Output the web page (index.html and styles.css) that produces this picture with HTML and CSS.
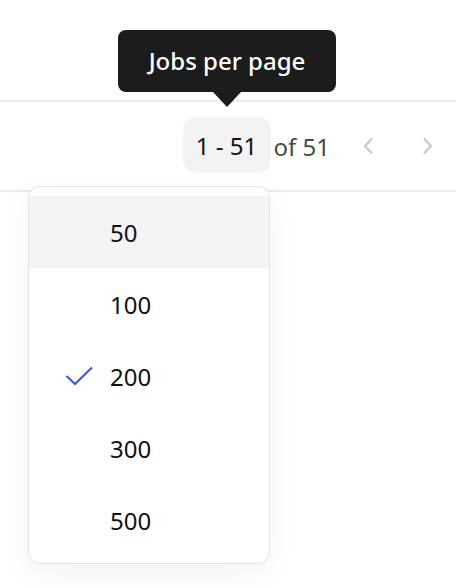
FILE: index.html
```html
<!DOCTYPE html>
<html>
<head>
<meta charset="utf-8">
<link rel="stylesheet" href="styles.css">
</head>
<body>
<div class="page">
  <div class="header"></div>
  <div class="toolbar">
    <button class="range">1 - 51</button>
    <span class="total">of 51</span>
    <button class="nav prev" aria-label="Previous">
      <svg width="12" height="18" viewBox="0 0 12 18"><path d="M10 1.5 L3 9 L10 16.5" fill="none" stroke="#c6c6c6" stroke-width="2"/></svg>
    </button>
    <button class="nav next" aria-label="Next">
      <svg width="12" height="18" viewBox="0 0 12 18"><path d="M2 1.5 L9 9 L2 16.5" fill="none" stroke="#c6c6c6" stroke-width="2"/></svg>
    </button>
  </div>

  <div class="tooltip">Jobs per page</div>

  <ul class="menu">
    <li class="item hover"><span class="check"></span><span>50</span></li>
    <li class="item"><span class="check"></span><span>100</span></li>
    <li class="item"><span class="check"><svg width="28" height="20" viewBox="0 0 28 20"><path d="M1.5 10 L10 18 L27 1.5" fill="none" stroke="#3a5be0" stroke-width="2.2"/></svg></span><span>200</span></li>
    <li class="item"><span class="check"></span><span>300</span></li>
    <li class="item"><span class="check"></span><span>500</span></li>
  </ul>
</div>
</body>
</html>
```

FILE: styles.css
```css
html, body {
  margin: 0;
  padding: 0;
  background: #ffffff;
}
body {
  font-family: "Noto Sans", "Open Sans", sans-serif;
  color: #111;
}
.page {
  position: relative;
  width: 456px;
  height: 588px;
  overflow: hidden;
}
.header {
  height: 100px;
  border-bottom: 2px solid #ececec;
}
.toolbar {
  height: 88px;
  border-bottom: 2px solid #ececec;
  display: flex;
  align-items: center;
  justify-content: flex-end;
  padding-right: 8px;
}
.range {
  font-family: inherit;
  font-size: 24px;
  font-weight: 400;
  color: #111;
  background: #f3f3f3;
  border: none;
  border-radius: 13px;
  height: 56px;
  width: 88px;
  padding: 0;
  margin-top: -2px;
  display: flex;
  align-items: center;
  justify-content: center;
}
.total {
  font-size: 24px;
  color: #4a4a4a;
  margin-left: 3px;
  margin-right: 18px;
}
.nav {
  width: 40px;
  height: 40px;
  border: none;
  background: none;
  padding: 0;
  display: flex;
  align-items: center;
  justify-content: center;
}
.nav.next { margin-left: 20px; }
.tooltip {
  position: absolute;
  top: 30px;
  left: 118px;
  width: 218px;
  height: 62px;
  background: #1c1c1c;
  color: #fff;
  border-radius: 8px;
  font-size: 24px;
  font-weight: 500;
  display: flex;
  align-items: center;
  justify-content: center;
  box-sizing: border-box;
  padding-bottom: 2px;
}
.tooltip::after {
  content: "";
  position: absolute;
  left: 50%;
  top: 100%;
  margin-left: -14px;
  border-left: 14px solid transparent;
  border-right: 14px solid transparent;
  border-top: 15px solid #1c1c1c;
}
.menu {
  position: absolute;
  top: 186px;
  left: 28px;
  width: 242px;
  box-sizing: border-box;
  margin: 0;
  padding: 9px 0 7px;
  list-style: none;
  background: #fff;
  border: 1px solid #e4e4e4;
  border-radius: 12px;
  box-shadow: 0 10px 30px rgba(0, 0, 0, 0.05);
  overflow: hidden;
}
.item {
  height: 72px;
  display: flex;
  align-items: center;
  padding-left: 36px;
  font-size: 24px;
  color: #111;
}
.item.hover {
  background: #f4f4f4;
}
.check {
  width: 28px;
  height: 20px;
  margin-right: 17px;
  display: flex;
  align-items: center;
}
.check svg { display: block; }
```
